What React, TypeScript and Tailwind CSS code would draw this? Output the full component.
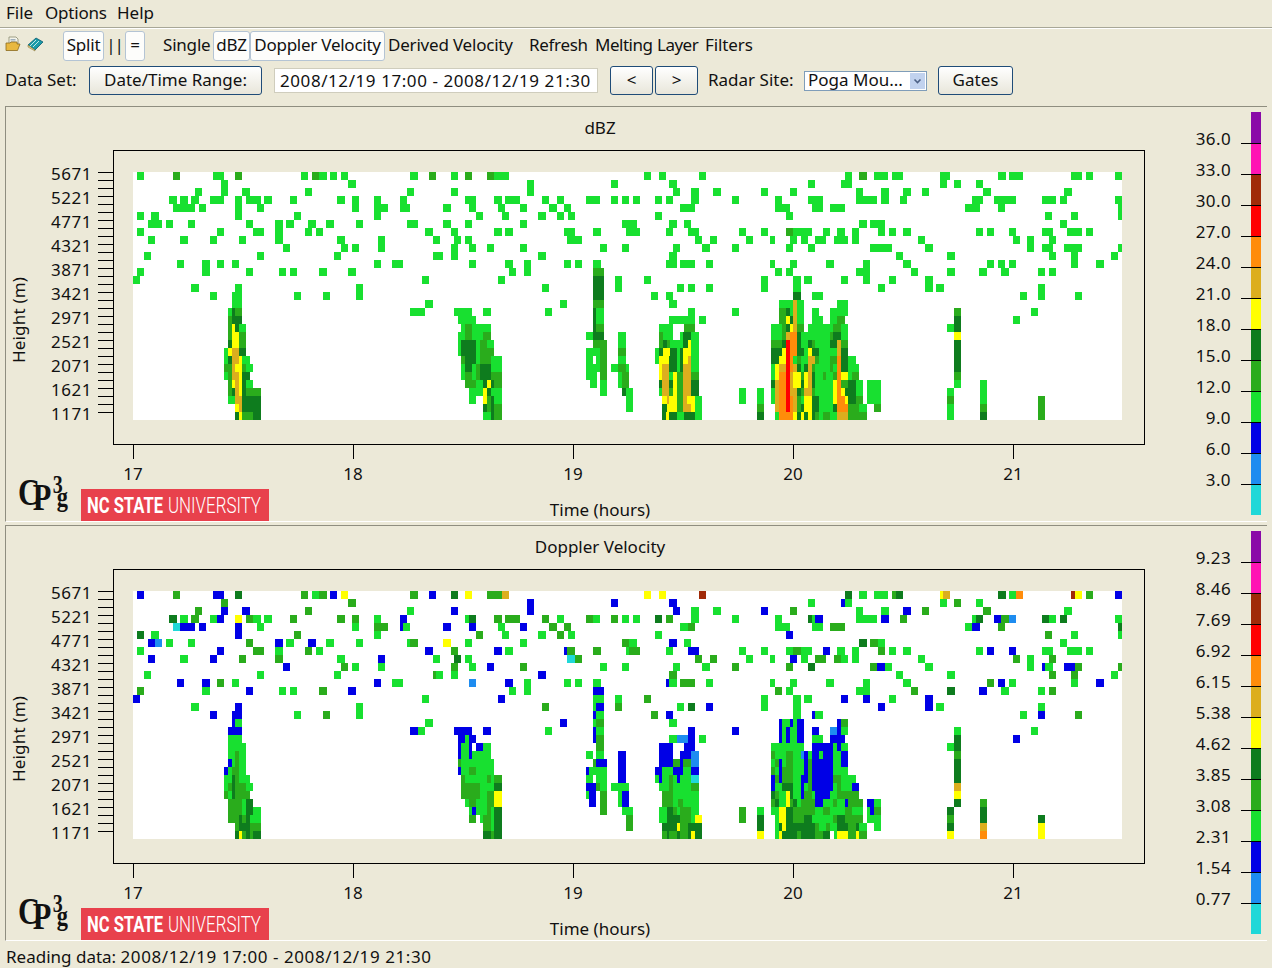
import React from "react";

const COLORS: Record<string, string> = {
  g: "#18e030", m: "#2aac1c", d: "#0e7c1e", y: "#ffff00", a: "#dcae1e", o: "#ff8c0a", r: "#ff0000",
  n: "#a02a08", B: "#0000e6", b: "#1e8cf0", c: "#20d8d8",
};
const BAR = ["#8a0aa8", "#ff14b4", "#a02a08", "#ff0000", "#ff8c0a", "#dcae1e", "#ffff00", "#0e7c1e", "#2aac1c", "#18e030", "#0000e6", "#1e8cf0", "#20d8d8"];

const T1 = [
"80 189m 310-342 375m 573 606m 628 660 693 900-925 957m",
"332 715","255 332 397 584 891",
"178 211 244 300-342 375 408-452 463 540 682 726 792 869",
"189-255 266 375 441 726 792-834 869-900",
"80 124 375 551 792",
"113-157 168 233 408 496 529 595 649 738 891-925",
"80 321 430-463 496 584 617 946",
"113 211 300 386 496 682 803 968",
"518 693 726 803","102 441 671 968-999",
"200 277 321 365 792 847-880",
"80 277 408 507 540 628 715","68 935","244 375 738",
"300 365-397 551 639 738","365-397 946",
"354-365 365-375d 375-397m 900-946",
"354-365m 365-397d",
"354-365m 365-375y 375-386d 386-408",
"354-365m 365-386y 386-408m",
"354-365d 365-386y 386-408m",
"343-354 354-365y 365-386a 386-408d",
"343-354 354-365d 365-386a 386-397y 397-419",
"343-365m 365-375a 375-397y 397-408m 408-430",
"343-354 354-365m 365-386a 386-397y 397-419d",
"354-365m 365-375y 375-386a 386-397y 397-408d 408-430",
"354-365m 365-375d 375-386a 386-397y 397-408d 408-452m",
"354-375 375-397a 397-452d",
"375-386y 386-397a 397-452d",
"375-386d 386-397y 397-430m 430-452d",
];
const T2 = [
"33 75m 141-163m 163-207 611 657 776","260 512 688","33 260 699 754 820 963",
"75-107 163 196-240 306 350 438-480 512 545 578 644 677 754 875",
"10 86 174 240 328 372 721-765","108 185 295 350 383 644",
"10 75 240 546-590 688 732",
"33 163 196 372-405 460 558-600 677 743-776 897 963",
"42 75 380-425 765 809 918",
"33 86 141 240 480 545 699 787 875","0-10 33 295 688",
"86 196 251-273 372 405 460 677-710 721-765 798",
"207 251-273 460-491m","174 460-491d 524-546 611 963-985",
"306 460-491d 524-546 710 743 798 963-985","460-491d 633 677",
"360 460-491m 688",
"42-96 130 315 460-468d 468-491 743 875",
"53-107 460-468d 468-491 688-765 776",
"64-75 75-97m 97-152 460-468d 468-491m 657-698 732-765m",
"53-75 75-97m 97-130 130-152m 438 460-491d 535 657-670m 670-698 720-730 730-752d 752-776",
"53-64 64-108d 108-120 120-141m 141-163 460-500m 535 657-670m 670-680d 680-690m 690-730 730-745d 745-752y 752-776",
"53-64 64-108d 108-120 120-163m 438 460-480 480-500m 535-557m 645 657-670d 670-690y 690-710d 710-720 720-730d 730-752y 752-776",
"64-75m 75-108d 108-120 120-152m 152-185 438-460 468-480 480-500m 535 645-657 657-688y 688-710d 710-720 720-730d 730-745y 745-752a 752-776",
"64-75 75-97d 97-108 108-120m 120-152d 152-185 438-480 480-500m 513-535 535-557m 557-567 657-665y 665-688a 688-710d 710-720 720-730d 730-752a 752-776",
"64-75 75-97m 97-108 108-120m 120-152d 152-185m 438-470 480-500m 535-545 545-567m 657-665y 665-688a 688-698 698-710y 710-730m 730-752a 752-776m",
"75-108m 108-130 130-140d 140-152y 152-163d 163-185m 449-470 480-500 535-545 545-567m 657-665d 665-688a 688-698d 698-710y 710-730m 730-752a 752-776d",
"86-130 130-140y 140-152d 152-185 480-500 545-557d 557-578 657-665 665-688a 688-698m 698-710y 710-730m 730-752a 752-776d 897 951",
"86-108 130-140y 140-152m 152-163d 163-185 557-578 665-680y 680-688a 688-710y 710-730m 730-740a 740-765y 765-786 897 951",
"130-140d 140-152m 152-163d 163-185m 557-578 665-680d 680-710y 710-730m 730-752a 752-765y 765-786 951m",
"130-152 152-163d 163-185m 665-678d 678-686y 686-710d 710-732 732-765d 765-786 951d",
];
const T3 = [
"224-246 268m 312-355 367-400 510-540 685 718-760 904-937 948 1035",
"114 213-246 510-532 551 617",
"59 257-279 334 400 455 640 883",
"15-37 114-158 257-320 334 389 606-640 672-738 815-858 870 1035",
"15-59 125-158 180-224 585-630 683 1045-1056",
"48 825 903 1045-1056","268 301-345 870",
"48-70m 70-125 158 202 246 323 356 400 617 650 716 815-848 892-936 948",
"0-15 60 92 136-168 191-235 246 444 728 770 837",
"48 114 301-366 466 770 815-848 881-936 1045-1056",
"378 532 837 903 1023",
"0-15 59 169 279 400 650 683 716 903 979",
"15 48 257-301 422 532 628 694 804 837",
"70 103 213 279 356 466",
"70 323 466 499 804","70d 125-158 750 804 914",
"26-70 70-80a 80-102 202-235",
"26-48m 48-59d 59-70 70-80a 80-102 125 180-235 552m 783",
"26-48m 48-59y 59-70d 70-80a 80-102 125-158 180-202 202-224m 552d 728",
"4-37 37-48m 48-59d 59-70y 70-80a 80-102m 114-190 190-212m 212-235 530 552d",
"4-37 37-48m 48-59a 59-80o 80-92d 92-180 180-190m 190-212d 212-235 552y",
"4-37m 37-48d 48-59r 59-80o 80-92d 92-114 114-125d 125-136m 136-180 180-200d 200-212a 212-235m 552d",
"4-37d 37-48y 48-59r 59-80o 80-102d 102-114 114-125y 125-147d 147-200 200-212a 212-235d 552d",
"4-26d 26-48y 48-59r 59-70o 70-80 80-92m 92-114 114-136a 136-147m 147-180 180-200m 200-212o 212-235d 235-257 552d",
"4-15 15-26y 26-48a 48-59r 59-70o 70-80a 80-92d 92-103 103-114d 114-125a 125-136m 136-180 180-190m 190-200 200-212o 212-235d 235-268 552d",
"4-15 15-26y 26-48o 48-59r 59-70a 70-92y 92-103m 103-114y 114-125a 125-136d 136-158 158-168m 168-190 190-200m 200-212o 212-235y 235-247 247-268m 552m",
"4-15d 15-26a 26-48o 48-59r 59-70a 70-92y 92-103d 103-114y 114-125a 125-136d 136-190 190-200y 200-212o 212-235m 235-257d 257-279 290-333 552 630",
"4-15 15-26a 26-48o 48-59r 59-80a 80-92d 92-103m 103-125a 125-136m 136-190 190-200y 200-212o 212-225y 225-257d 257-279 290-333 530 630",
"4-15 15-26a 26-48o 48-59r 59-70o 70-80a 80-92m 92-103 103-125y 125-147d 147-190 190-200y 200-225o 225-235y 235-257d 257-279m 290-333 530m 630 804m",
"15-26a 26-48o 48-59r 59-70o 70-80a 80-92m 92-103d 103-125y 125-147d 147-190 190-200d 200-235o 235-268m 268-290 312-333m 530 630m 804m",
"15-26 26-70o 70-80y 80-92d 92-103y 103-114d 114-125y 125-136d 136-147m 147-158 158-180m 180-200 200-235a 235-290m 530 630d 804m",
];
const B1 = [
"80B 189m 310-342B 375d 573m 606 628m 660B 693y 900-924m 957B",
"332m 715m","255m 332B 397B 584m 891",
"178d 211 244m 300 321B 375y 408m 430 463 540m 682m 726m 792 869B",
"189c 211-255B 266B 375B 441 726 792-834m 869-880B 880-900",
"80d 124 375B 551m 792",
"113B 135b 168 233 408m 496B 529 595B 649 738 891-900 900-924m",
"80 321B 430-463m 496 584m 617 946B",
"113B 211 300B 386m 496m 682 803B 968",
"518B 693m 726 803","102 441 671 968-979m 979-999",
"200B 277B 321m 365 792B 847-880",
"80m 277 408B 507 540 628m 715B","68B 935","244 375B 738",
"300B 365-397B 551 639m 738","365-375B 375-397 946",
"354-397B 900-924B 924-946",
"354-397","354-408","354-375 375-386m 386-408",
"354-365B 365-375 375-386m 386-408",
"343-354B 354-365 365-386m 386-408",
"343-365 365-375d 375-386m 386-419",
"343-354 354-365m 365-375d 375-408m 408-430",
"343-354m 354-365 365-375d 375-419m",
"354-397m 397-408 408-430d",
"354-397m 397-408 408-430d 430-452",
"354-386m 386-397d 397-408m 408-419d 419-452",
"375-386m 386-419d 419-452m",
"375-386d 386-397y 397-408m 408-419d 419-430m 430-452d",
];
const B2 = [
"33d 75y 141-185m 185-207a 611y 657y 776n","260B 512B 688B","33B 260B 699B 754 820 963B",
"75-86 86-108d 163m 196-240m 306m 350 438-460m 460-480 512m 545 578 644d 677m 754 875",
"10B 86B 174 240B 328m 372m 721-743 743-765m","108m 185 295 350m 383 644",
"10y 75 240 546-568m 568-590 688B 732",
"33m 163B 196 372-380B 380-405m 460m 558-568 568-600m 677 743-776B 897 963",
"42d 75 380-405c 405-425m 765m 809m 918",
"33m 86 141B 240m 480 545 699 787 875m","0-10 33 295B 688m",
"86b 196B 251-273 372 405 460 677-688B 688-710 721-765m 798",
"207 251-273 460-491B","174B 460-491 524 611m 963",
"306m 460-468 468-491B 524m 710 743d 798B 963","460-468B 468-491 633m 677B",
"360B 460-468 468-491m 688",
"42-96B 130B 315 460-468B 468-491 743B 875B",
"53-75B 75-86 86-107B 460-468B 468-491m 688 710-743b 743-765B 776",
"53-64B 64-86 86-97B 108-130B 130-152 468-491m 657-700B 732-765B",
"53-64B 64-86 86-97B 97-152 438 468-491 535B 657-700B 721-752B 752-776b",
"53-64m 64-163 460-468m 468-500B 535B 657-698B 698-720m 720-730B 730-752m 752-776b",
"53-64B 64-86 86-108m 108-163 438-446B 446-500 535B 645-665B 665-698 698-730B 730-752 752-776B",
"64-75m 75-141 141-152m 152-163 163-185m 438-460 468-500 535B 645-657 657-665B 665-688 688-698m 698-710 710-720B 720-752 752-776c",
"64-120m 120-163 163-185d 438-468B 468-480m 480-500 513-567 657-688 688-698m 698-752 752-776m",
"64-120m 120-141 141-163m 163-185y 438-446 446-468B 480-500m 535-545 545-567B 665-698m 698-776",
"75-86 86-108m 108-141 141-163m 163-185y 446-468B 480-500m 535-545 545-567B 665-698m 698-715 715-730m 730-776",
"86-97 97-108B 108-141 141-152m 152-163 163-185d 480-500m 545-578 657-680 680-698d 698-710m 710-720 720-752m 752-776 897m 951",
"86-108m 120-130 130-152m 152-163 163-185d 557-578m 657-680 680-720d 720-752m 752-765 765-786y 897m 951d",
"130-152m 152-163 163-185d 557-578m 665-710d 710-720y 720-745m 745-786d 951d",
"130-152d 152-163m 163-185d 665-680m 680-686d 686-710m 710-720d 720-745m 745-752d 752-765y 765-786d 951y",
];
const B3 = [
"224d 268 312-355 367-378m 378-400d 510-520y 520-540a 685d 718-738 738-760o 904-915n 915-937y 948m 1035B",
"114 213-224B 224-246 510 551m 617",
"59m 257 334 400B 455m 640m 883",
"15-37 114-125d 125-136 136-158B 257-320 334B 389m 606-617 617-640d 672-694B 694-716m 716-738b 815-837d 837-858 870d 1035",
"15-59 125-158 180-224m 585-606 606-630B 683m 1045-1056d",
"48B 825m 903 1045-1056","268d 301-323m 323-345 870",
"48-70 70-92m 92-125 158B 202 246 323m 356 400 617 650B 716B 815-848 892-936 948",
"0-15 60B 92 136-168m 191-213m 213-235 246 444 728m 770 837m",
"48m 114d 301-320m 320-345B 345-366 466 770 815-826B 826-848 881-915B 915-936m 1045-1056m",
"378 532 837m 903m 1023",
"0-15 59 169 279 400 650m 683B 716 903 979B",
"15m 48 257-301 422m 532d 628B 694 804 837m",
"70 103 213B 279B 356 466B",
"70 323B 466B 499 804","70 125-135B 135-158 750 804B 914m",
"26-37B 37-59 59-70B 70-80 80-102B 202-212B 212-235m",
"26-37B 37-48 48-59B 59-80 80-102B 125B 180-202b 202-212B 212-235 552 783",
"26-37B 37-48 48-59B 59-80 80-102B 125-158 180-225B 552d 728B",
"4-102 125-190B 190-200 200-212B 212-235 530 552d",
"4-15m 15-48 48-70m 70-92 92-103b 103-114B 114-125 125-147B 147-158 158-190B 190-212 212-235B 552m",
"4-15 15-26m 26-37B 37-48 48-70m 70-102 102-114B 114-125m 125-190B 190-212 212-235B 552d",
"4-15m 15-26 26-37B 37-70m 70-102 102-114B 114-125m 125-190B 190-235 552d",
"4-15B 15-26m 26-37B 37-70m 70-92 92-114B 114-125m 125-190B 190-212m 212-257 552d",
"4-15B 15-37 37-70d 70-92 92-103B 103-114 114-125m 125-190B 190-200 200-212m 212-246 246-268B 552a",
"4-15d 15-26m 26-48 48-59y 59-70d 70-92 92-103B 103-125m 125-136 136-180B 180-200 200-268m 552y",
"4-15m 15-26d 26-48 48-59y 59-70m 70-80d 80-92 92-136m 136-158B 158-190 190-200m 200-224 224-235B 235-280m 290-312B 312-333 552d 630m",
"4-26 26-48y 48-70d 70-136m 136-158 158-180m 180-224 224-246m 246-279 290-300 300-312B 312-333m 530d 630d",
"15-26 26-48y 48-70d 70-103m 103-125d 125-190 190-200m 200-224d 224-279m 290-333 530m 630d 804d",
"15-26 26-37d 37-48y 48-136d 136-147m 147-169 169-180m 180-200 200-235d 235-257m 257-268d 268-290 312 530d 630a 804y",
"15-26 26-37y 37-80d 80-92m 92-136d 136-158m 158-180d 192-200 200-235y 235-257m 257-268y 268-290m 530y 630o 804y",
];

type Cell = { x: number; w: number; y: number; c: string };
function cells(groups: [number, string[]][], top: number): Cell[] {
  const out: Cell[] = [];
  for (const [base, rows] of groups) {
    rows.forEach((row, r) => {
      for (const tok of row.split(" ")) {
        const m = tok.match(/^(\d+)(?:-(\d+))?([a-zA-Z])?$/);
        if (!m) continue;
        const a = Number(m[1]);
        const b = m[2] ? Number(m[2]) : a + 22;
        const x1 = Math.round(base + a / 3);
        const x2 = Math.min(Math.round(base + b / 3), 1122);
        out.push({ x: x1, w: x2 - x1, y: top + r * 8, c: COLORS[m[3] || "g"] });
      }
    });
  }
  return out;
}

const YLABELS = ["5671", "5221", "4771", "4321", "3871", "3421", "2971", "2521", "2071", "1621", "1171"];
const XT = [[17, 133], [18, 353], [19, 573], [20, 793], [21, 1013]];
const F = "'Noto Sans','DejaVu Sans',sans-serif";

function Chart({ title, labels, data }: { title: string; labels: string[]; data: Cell[] }) {
  return (
    <svg className="block w-[1261px] h-[414px]" viewBox="6 107 1261 414" style={{ fontFamily: F, fontSize: 17 }}>
      <text x={600} y={134} textAnchor="middle" fill="#111">{title}</text>
      <rect x={113.5} y={150.5} width={1031} height={294} fill="none" stroke="#000" />
      <rect x={133} y={172} width={989} height={248} fill="#fff" />
      <g shapeRendering="crispEdges">
        {data.map((d, i) => <rect key={i} x={d.x} y={d.y} width={d.w} height={8} fill={d.c} />)}
        {Array.from({ length: 31 }, (_, i) => <rect key={i} x={98} y={172 + i * 8} width={15} height={1} fill="#000" />)}
        {XT.map(([, x]) => <rect key={x} x={x} y={444} width={1} height={15} fill="#000" />)}
        {BAR.map((c, i) => <rect key={c} x={1251} y={112 + i * 31} width={10} height={31} fill={c} />)}
        {labels.map((l, i) => <rect key={l} x={1241} y={143 + i * 31} width={20} height={1} fill="#000" />)}
      </g>
      {YLABELS.map((l, i) => <text key={l} x={92} y={180 + i * 24} textAnchor="end" letterSpacing={0.5} fill="#111">{l}</text>)}
      {XT.map(([v, x]) => <text key={v} x={x} y={480} textAnchor="middle" fill="#111">{v}</text>)}
      {labels.map((l, i) => <text key={l} x={1231} y={145 + i * 31} textAnchor="end" letterSpacing={0.4} fill="#111">{l}</text>)}
      <text x={600} y={516} textAnchor="middle" fill="#111">Time (hours)</text>
      <text transform="translate(25 320) rotate(-90)" textAnchor="middle" letterSpacing={0.2} fill="#111">Height (m)</text>
      <text transform="scale(.8 1)" fill="#111" fontFamily="'Liberation Serif',serif" fontWeight={700}>
        <tspan x={22.5} y={505} fontSize={38}>C</tspan>
        <tspan x={41} y={510} fontSize={38}>P</tspan>
        <tspan x={66} y={493} fontSize={25}>3</tspan>
        <tspan x={71} y={506} fontSize={28}>g</tspan>
      </text>
      <rect x={81} y={489} width={188} height={32} fill="#e8414c" />
      <text x={87} y={513} fontFamily="Roboto,sans-serif" fontWeight={700} fontSize={22} fill="#fff" textLength={76} lengthAdjust="spacingAndGlyphs">NC STATE</text>
      <text x={168} y={513} fontFamily="Roboto,sans-serif" fontWeight={300} fontSize={22} fill="#fff" textLength={93} lengthAdjust="spacingAndGlyphs">UNIVERSITY</text>
    </svg>
  );
}

function Panel({ children }: { children: React.ReactNode }) {
  return (
    <div className="ml-[5px] w-[1262px] h-[416px] border-t border-l border-t-[#8f8e80] border-l-[#8f8e80] border-b border-b-white overflow-hidden">
      {children}
    </div>
  );
}

const flat = "h-[30px] pb-[3px] rounded-[3px] border border-[#b4c4d4] bg-[#fdfdfb] flex items-center justify-center";
const raised = "h-[29px] pb-[2px] rounded-[3px] border border-[#1f4c78] bg-gradient-to-b from-white to-[#e8e6da] flex items-center justify-center";

const topData = cells([[110, T1], [440, T2], [770, T3]], 172);
const botData = cells([[110, B1], [440, B2], [770, B3]], 172);

export default function App() {
  return (
    <div className="w-[1272px] h-[968px] overflow-hidden bg-[#ece9d8] text-[17px] leading-none text-[#111]" style={{ fontFamily: F }}>
      <div className="h-[27px] flex items-center pl-[6px] pb-[3px]">
        <span className="w-[39px]">File</span><span className="w-[72px] tracking-[-0.2px]">Options</span><span>Help</span>
      </div>
      <div className="h-[2px] border-t border-t-[#a8a797] border-b border-b-white" />
      <div className="h-[33px] flex items-center pl-[5px] whitespace-nowrap">
        <svg width="16" height="16" viewBox="0 0 16 16" className="shrink-0 mb-[3px]">
          <path d="M4 1h7l2 2v5H4z" fill="#f4f4ea" stroke="#8a8a70" strokeWidth=".8" />
          <path d="M5.5 3.5h5M5.5 5h5M5.5 6.5h5" stroke="#7a90a8" strokeWidth=".7" />
          <path d="M1 7h4l1-1h6v2h3l-2.5 6.5H1z" fill="#e8b840" stroke="#8a6a20" strokeWidth=".8" />
        </svg>
        <svg width="17" height="15" viewBox="0 0 17 15" className="ml-[6px] shrink-0 mb-[3px]">
          <path d="M1 8l8-7 7 4-8 8z" fill="#1a9aa8" stroke="#0a5a70" strokeWidth=".8" />
          <path d="M3 9l6-6M6 10l6-6" stroke="#bfe8e8" strokeWidth="1" />
          <path d="M1 8l7 5v1L1 10z" fill="#e8d48a" stroke="#7a6a30" strokeWidth=".5" />
        </svg>
        <div className={`${flat} w-[41px] ml-[19px] tracking-[-0.2px]`}>Split</div>
        <div className="w-[21px] text-center pb-[3px] tracking-[-1px]">||</div>
        <div className={`${flat} w-[20px]`}>=</div>
        <div className="ml-[18px] w-[50px] pb-[3px] tracking-[-0.2px]">Single</div>
        <div className={`${flat} w-[37px] tracking-[-0.2px]`}>dBZ</div>
        <div className={`${flat} w-[135px] tracking-[-0.25px]`}>Doppler Velocity</div>
        <div className="ml-[3px] w-[141px] pb-[3px] tracking-[-0.2px]">Derived Velocity</div>
        <div className="w-[66px] pb-[3px] tracking-[-0.3px]">Refresh</div>
        <div className="w-[62px] pb-[3px] tracking-[-0.5px]">Melting</div>
        <div className="w-[48px] pb-[3px] tracking-[-0.5px]">Layer</div>
        <div className="pb-[3px] tracking-[-0.1px]">Filters</div>
      </div>
      <div className="h-[44px] flex items-start pt-[4px] pl-[5px] whitespace-nowrap">
        <div className="w-[84px] h-[29px] pb-[2px] flex items-center">Data Set:</div>
        <div className={`${raised} w-[173px]`}>Date/Time Range:</div>
        <div className="ml-[12px] mt-[2px] w-[324px] h-[25px] pb-[1px] bg-white border border-[#cfcdbd] flex items-center pl-[5px] tracking-[0.57px]">2008/12/19 17:00 - 2008/12/19 21:30</div>
        <div className={`${raised} w-[43px] ml-[12px]`}>&lt;</div>
        <div className={`${raised} w-[43px] ml-[2px]`}>&gt;</div>
        <div className="ml-[10px] w-[96px] h-[29px] pb-[2px] flex items-center">Radar Site:</div>
        <div className="mt-[5px] w-[123px] h-[20px] bg-white border border-[#7f9db9] flex items-start overflow-hidden relative pl-[3px]">
          <span className="h-[18px] overflow-hidden leading-[16px]">Poga Mou...</span>
          <div className="absolute right-[1px] top-[1px] w-[15px] h-[16px] bg-[#c1d2ee] flex items-center justify-center">
            <svg width="9" height="7" viewBox="0 0 9 7"><path d="M1.5 1.5l3 3 3-3" fill="none" stroke="#4d6185" strokeWidth="1.6" /></svg>
          </div>
        </div>
        <div className={`${raised} w-[75px] ml-[11px]`}>Gates</div>
      </div>
      <Panel><Chart title="dBZ" labels={["36.0", "33.0", "30.0", "27.0", "24.0", "21.0", "18.0", "15.0", "12.0", "9.0", "6.0", "3.0"]} data={topData} /></Panel>
      <div className="h-[3px]" />
      <Panel><Chart title="Doppler Velocity" labels={["9.23", "8.46", "7.69", "6.92", "6.15", "5.38", "4.62", "3.85", "3.08", "2.31", "1.54", "0.77"]} data={botData} /></Panel>
      <div className="h-[27px] flex items-center pl-[6px] whitespace-nowrap pt-[4px]">Reading data:&nbsp;<span className="tracking-[0.57px]">2008/12/19 17:00 - 2008/12/19 21:30</span></div>
    </div>
  );
}
